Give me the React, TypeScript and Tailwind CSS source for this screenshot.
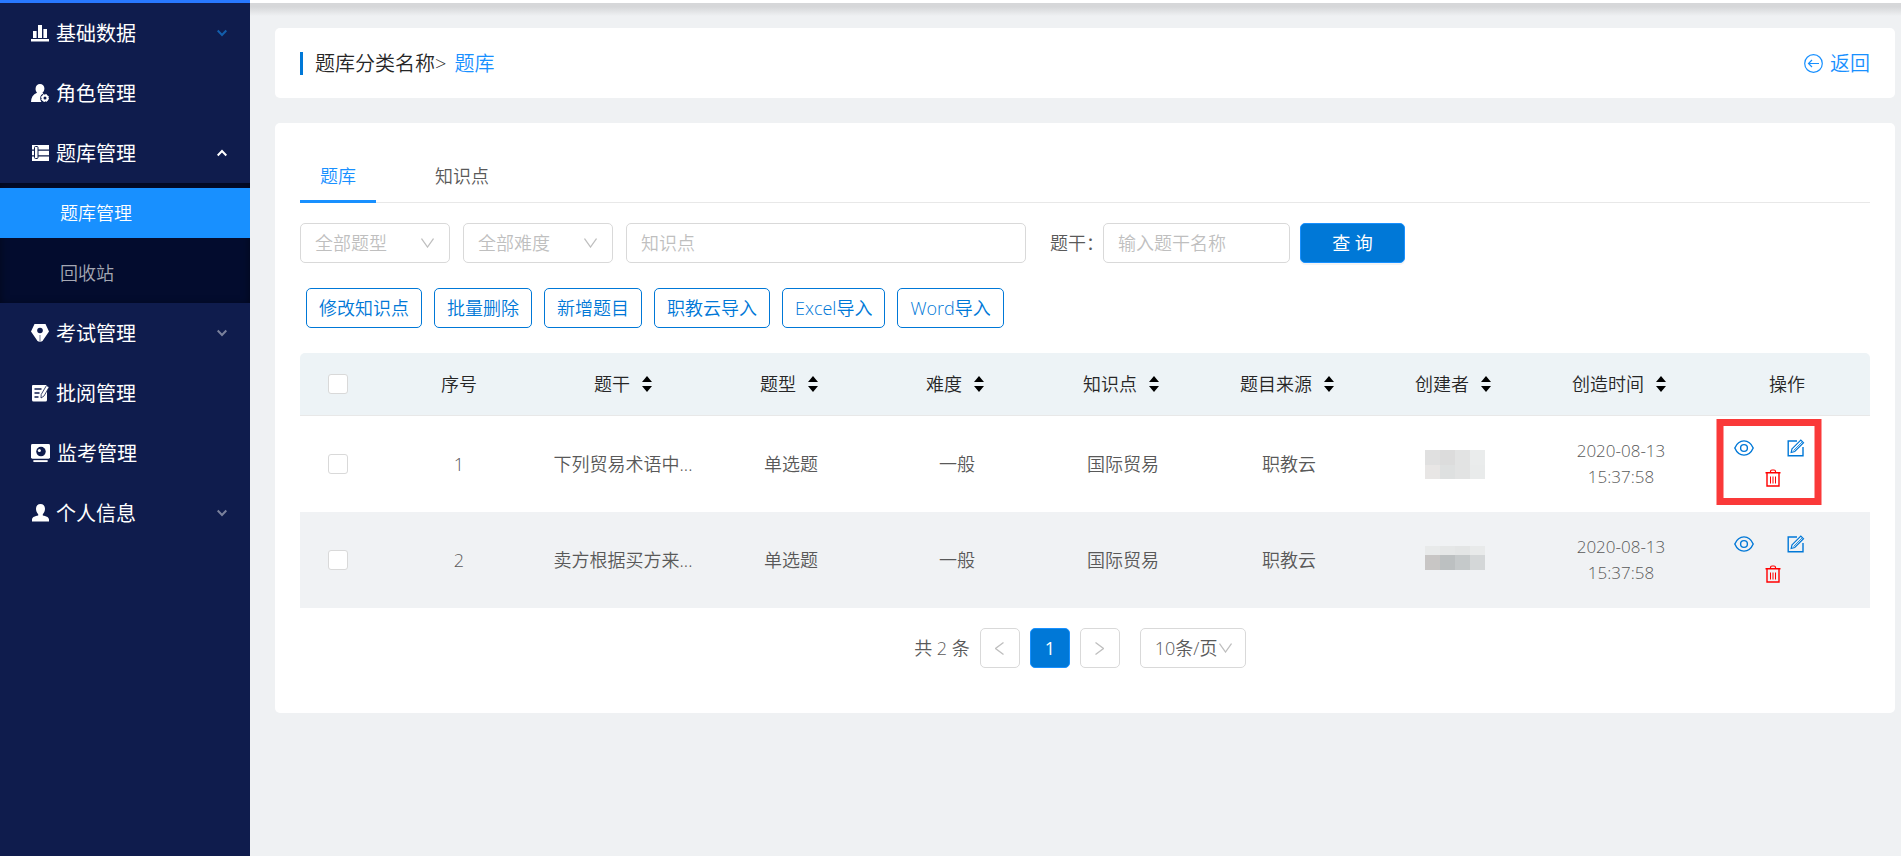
import { useState } from 'react';
import type { ReactNode } from 'react';
import clsx from 'clsx';

interface MenuItem {
  id: string;
  label: string;
  icon: ReactNode;
  arrow?: 'up' | 'down';
  arrowColor?: string;
  children?: { id: string; label: string }[];
}

interface Question {
  id: number;
  stem: string;
  type: string;
  level: string;
  point: string;
  source: string;
  creator: ReactNode;
  date: string;
  time: string;
}

const ChartIcon = () => (
  <svg width="18" height="18" viewBox="0 0 18 18" fill="currentColor" aria-hidden="true">
    <path d="M0 15h18v2.5H0zM2 7h3.6v7H2zM7 1h4v13H7zM12.4 5H16v9h-3.6z" />
  </svg>
);

const RoleIcon = () => (
  <svg width="18" height="18" viewBox="0 0 18 18" aria-hidden="true">
    <path
      fill="currentColor"
      d="M9 0a4.4 4.4 0 0 1 4.4 4.5c0 1.800-.8 3.300-2 4.300l1 .7A5 5 0 0 0 9.200 14c0 1.600.5 3 1.300 4H0c0-4.500 2-7.700 6-9.300A5 5 0 0 1 4.600 4.500 4.400 4.400 0 0 1 9 0z"
    />
    <circle cx="14" cy="14" r="2.500" fill="none" stroke="currentColor" strokeWidth="2" />
    <circle cx="14" cy="14" r="3.600" fill="none" stroke="currentColor" strokeWidth="1" strokeDasharray="1.500 1.330" />
  </svg>
);

const BankIcon = () => (
  <svg width="18" height="18" viewBox="0 0 18 18" aria-hidden="true">
    <path fill="currentColor" d="M1 1h17v4.500H1zM1 6.700h17v4.600H1zM1 12.500h17V17H1z" />
    <rect x="3.500" y="2.500" width="3.500" height="12" rx="1" fill="#fff" stroke="#0f1c4d" strokeWidth="1" />
  </svg>
);

const PenIcon = () => (
  <svg width="18" height="18" viewBox="0 0 18 18" aria-hidden="true">
    <path fill="currentColor" d="M3.500 0h11L18 7.500 11.500 17 9.300 18V11h-.6v7l-2.200-1L0 7.500z" />
    <circle cx="9" cy="6.500" r="2.800" fill="#0f1c4d" />
  </svg>
);

const ReviewIcon = () => (
  <svg width="18" height="18" viewBox="0 0 18 18" aria-hidden="true">
    <path fill="currentColor" d="M2 1h14v15a1.500 1.500 0 0 1-1.500 1.500h-12A1.500 1.500 0 0 1 1 16V2a1 1 0 0 1 1-1z" />
    <path fill="none" stroke="#0f1c4d" strokeWidth="1.300" d="M3.500 5h7M3.500 9h5M3.500 13h4" />
    <path fill="currentColor" stroke="#0f1c4d" strokeWidth=".8" d="M15.500 1.500 18.200 3 13 12l-3 2 .2-3.500z" />
  </svg>
);

const MonitorIcon = () => (
  <svg width="19" height="19" viewBox="0 0 20 20" aria-hidden="true">
    <rect width="20" height="15.500" rx="1.500" fill="currentColor" />
    <path fill="currentColor" d="M2.500 17h15v2h-15z" />
    <circle cx="10.500" cy="8" r="5" fill="#0f1c4d" />
    <circle cx="8.800" cy="6.800" r="1.600" fill="currentColor" />
  </svg>
);

const PersonIcon = () => (
  <svg width="18" height="18" viewBox="0 0 18 18" fill="currentColor" aria-hidden="true">
    <path d="M9.500 0C12.200 0 14 2 14 4.800c0 2.200-.8 4.200-2.200 5.400v1.300c3 .8 6.200 1.500 6.200 4v2H1v-2c0-2.500 3.200-3.200 6.200-4v-1.300C5.800 9 5 7 5 4.800 5 2 6.800 0 9.500 0z" />
  </svg>
);

const SmallArrow = ({ up }: { up?: boolean }) => (
  <svg width="10" height="8" viewBox="0 0 10 8" fill="none" stroke="currentColor" strokeWidth="2" aria-hidden="true">
    <path d={up ? 'M.7 6.500 5 2l4.300 4.500' : 'M.7 1.500 5 6l4.300-4.500'} />
  </svg>
);

const ThinChevron = () => (
  <svg width="13" height="10" viewBox="0 0 13 10" fill="none" stroke="#bfbfbf" strokeWidth="1.300" aria-hidden="true">
    <path d="M.5.5 6.500 9l6-8.500" />
  </svg>
);

const SortIcon = () => (
  <svg width="10" height="16" viewBox="0 0 10 16" fill="#000" aria-hidden="true">
    <path d="M5 0l5 6H0zM0 10h10l-5 6z" />
  </svg>
);

const BackIcon = () => (
  <svg width="19" height="19" viewBox="0 0 19 19" fill="none" stroke="currentColor" strokeWidth="1.200" aria-hidden="true">
    <circle cx="9.500" cy="9.500" r="8.800" />
    <path d="M15 9.500H4.500M8 6 4.500 9.500 8 13" />
  </svg>
);

const EyeIcon = () => (
  <svg width="20" height="16" viewBox="0 0 20 16" fill="none" stroke="currentColor" strokeWidth="1.400" aria-hidden="true">
    <path d="M.8 8C2.800 3.400 6 .9 10 .9S17.200 3.400 19.200 8c-2 4.600-5.200 7.100-9.200 7.100S2.800 12.600.8 8z" />
    <circle cx="10" cy="8" r="3.400" />
  </svg>
);

const EditIcon = () => (
  <svg width="18" height="18" viewBox="0 0 18 18" fill="none" stroke="currentColor" strokeWidth="1.400" aria-hidden="true">
    <path d="M10 2H1.200v14.800H16V8" />
    <path d="M5 9.800 13.800 1l2.700 2.700L7.700 12.500l-3.500 1z" strokeWidth="1.200" />
    <path d="M6.500 11.500 15 3" strokeWidth=".8" />
  </svg>
);

const TrashIcon = () => (
  <svg width="16" height="18" viewBox="0 0 16 18" fill="none" stroke="currentColor" aria-hidden="true">
    <path d="M5.500 3.500V2.500A1.500 1.500 0 0 1 7 1h2a1.500 1.500 0 0 1 1.500 1.500v1" strokeWidth="1.200" />
    <path d="M.5 3.700h15M2 3.700V17h12V3.700" strokeWidth="1.400" />
    <path d="M5.500 7.500v7M8 7.500v7M10.500 7.500v7" strokeWidth="1" />
  </svg>
);

const MENU: MenuItem[] = [
  { id: 'base', label: '基础数据', icon: <ChartIcon />, arrow: 'down', arrowColor: 'text-[#135eac]' },
  { id: 'role', label: '角色管理', icon: <RoleIcon /> },
  {
    id: 'bank',
    label: '题库管理',
    icon: <BankIcon />,
    arrow: 'up',
    arrowColor: 'text-white',
    children: [
      { id: 'bank-list', label: '题库管理' },
      { id: 'recycle', label: '回收站' },
    ],
  },
  { id: 'exam', label: '考试管理', icon: <PenIcon />, arrow: 'down', arrowColor: 'text-[#7a819c]' },
  { id: 'review', label: '批阅管理', icon: <ReviewIcon /> },
  { id: 'monitor', label: '监考管理', icon: <MonitorIcon /> },
  { id: 'profile', label: '个人信息', icon: <PersonIcon />, arrow: 'down', arrowColor: 'text-[#7a819c]' },
];

const TABS = ['题库', '知识点'];

const ACTIONS = ['修改知识点', '批量删除', '新增题目', '职教云导入', 'Excel导入', 'Word导入'];

const COLUMNS = [
  { label: '序号', sortable: false },
  { label: '题干', sortable: true },
  { label: '题型', sortable: true },
  { label: '难度', sortable: true },
  { label: '知识点', sortable: true },
  { label: '题目来源', sortable: true },
  { label: '创建者', sortable: true },
  { label: '创造时间', sortable: true },
  { label: '操作', sortable: false },
];

// Creator names are masked with a block mosaic
function Mosaic({ top, bottom, split, end }: { top: string[]; bottom: string[]; split: number; end: number }) {
  return (
    <svg width="60" height="29" viewBox="0 0 60 29" className="mx-auto block" role="img" aria-label="创建者">
      {top.map((fill, i) => (
        <rect key={`t${i}`} x={i * 15} y={0} width={15} height={split} fill={fill} />
      ))}
      {bottom.map((fill, i) => (
        <rect key={`b${i}`} x={i * 15} y={split} width={15} height={end - split} fill={fill} />
      ))}
    </svg>
  );
}

const QUESTIONS: Question[] = [
  {
    id: 1,
    stem: '下列贸易术语中...',
    type: '单选题',
    level: '一般',
    point: '国际贸易',
    source: '职教云',
    creator: (
      <Mosaic
        top={['#e0e0e0', '#dcdcdc', '#e2e3e3', '#eaecec']}
        bottom={['#e8e6e5', '#dee0e0', '#e2e3e3', '#e9ebeb']}
        split={15}
        end={29}
      />
    ),
    date: '2020-08-13',
    time: '15:37:58',
  },
  {
    id: 2,
    stem: '卖方根据买方来...',
    type: '单选题',
    level: '一般',
    point: '国际贸易',
    source: '职教云',
    creator: (
      <Mosaic
        top={['#e8eaea', '#e5e7e7', '#e3e5e5', '#e8eaea']}
        bottom={['#c8c6c5', '#bcc0c1', '#c5c9ca', '#d4d7d8']}
        split={9}
        end={24}
      />
    ),
    date: '2020-08-13',
    time: '15:37:58',
  },
];

const checkboxClass =
  'block size-5 mx-auto appearance-none rounded-[3px] border border-[#d9d9d9] bg-white checked:border-[#1890ff] checked:bg-[#1890ff]';

const fieldClass =
  'h-10 rounded-[5px] border border-[#d9d9d9] bg-white px-[14px] placeholder:text-[#bfbfbf] outline-none focus:border-[#1890ff]';

function Sidebar() {
  const [active, setActive] = useState('bank-list');

  return (
    <nav className="w-[250px] shrink-0 border-t-3 border-[#2878ff] bg-[#0f1c4d] font-normal text-white">
      <ul>
        {MENU.map((item) => (
          <li key={item.id}>
            <button type="button" className="flex h-15 w-full items-center gap-[7px] pr-[23px] pl-[31px] text-[20px]">
              {item.icon}
              <span className="pt-[2px]">{item.label}</span>
              {item.arrow && (
                <span className={clsx('ml-auto', item.arrowColor)}>
                  <SmallArrow up={item.arrow === 'up'} />
                </span>
              )}
            </button>
            {item.children && (
              <ul className="flex flex-col gap-[10px] bg-[#030c2e] py-[5px] shadow-[inset_0_2px_8px_rgba(0,0,0,0.45)]">
                {item.children.map((child) => (
                  <li key={child.id}>
                    <button
                      type="button"
                      onClick={() => setActive(child.id)}
                      className={clsx(
                        'flex h-[50px] w-full items-center pl-[60px] text-[18px] font-[350]',
                        active === child.id ? 'bg-[#1890ff] text-white' : 'text-[#a5a8b3]'
                      )}
                    >
                      {child.label}
                    </button>
                  </li>
                ))}
              </ul>
            )}
          </li>
        ))}
      </ul>
    </nav>
  );
}

function FilterSelect({ label }: { label: string }) {
  return (
    <div className="relative">
      <select aria-label={label} className={clsx(fieldClass, 'w-[150px] appearance-none text-[#bfbfbf]')}>
        <option>{label}</option>
      </select>
      <span className="pointer-events-none absolute inset-y-0 right-4 flex items-center">
        <ThinChevron />
      </span>
    </div>
  );
}

function RowActions({ highlighted }: { highlighted?: boolean }) {
  return (
    <div className="relative mr-9 mb-[2px] flex flex-col items-center gap-3">
      <div className="flex items-center gap-[33px] text-[#0078d7]">
        <button type="button" aria-label="查看">
          <EyeIcon />
        </button>
        <button type="button" aria-label="编辑">
          <EditIcon />
        </button>
      </div>
      <button type="button" aria-label="删除" className="ml-2 text-[#ff0000]">
        <TrashIcon />
      </button>
      {highlighted && (
        <div className="pointer-events-none absolute -top-5 -bottom-[18px] left-1/2 w-[105px] -translate-x-1/2 border-7 border-[#fa3939]" />
      )}
    </div>
  );
}

function QuestionTable() {
  return (
    <table className="w-full table-fixed border-separate border-spacing-0 text-center">
      <colgroup>
        <col className="w-[76px]" />
        {COLUMNS.map((col) => (
          <col key={col.label} />
        ))}
      </colgroup>
      <thead className="text-[#262626]">
        <tr className="h-[63px]">
          <th className="rounded-tl-[5px] border-b border-[#e8e8e8] bg-[#edf3f6] p-0">
            <input type="checkbox" aria-label="全选" className={checkboxClass} />
          </th>
          {COLUMNS.map((col) => (
            <th
              key={col.label}
              className={clsx(
                'border-b border-[#e8e8e8] bg-[#edf3f6] font-[350] last:rounded-tr-[5px]',
                col.sortable && 'pr-1'
              )}
            >
              <span className="inline-flex items-center gap-3">
                {col.label}
                {col.sortable && (
                  <button type="button" aria-label={`${col.label}排序`}>
                    <SortIcon />
                  </button>
                )}
              </span>
            </th>
          ))}
        </tr>
      </thead>
      <tbody>
        {QUESTIONS.map((q, i) => (
          <tr key={q.id} className="h-24 even:bg-[#f0f2f4]">
            <td>
              <input type="checkbox" aria-label={`选择第${q.id}题`} className={checkboxClass} />
            </td>
            <td>{q.id}</td>
            <td className="pr-1">{q.stem}</td>
            <td>{q.type}</td>
            <td>{q.level}</td>
            <td>{q.point}</td>
            <td>{q.source}</td>
            <td>{q.creator}</td>
            <td className="text-[17px] leading-[26px]">
              {q.date}
              <br />
              {q.time}
            </td>
            <td>
              <RowActions highlighted={i === 0} />
            </td>
          </tr>
        ))}
      </tbody>
    </table>
  );
}

function Pagination() {
  const box = 'flex size-10 items-center justify-center rounded-[5px] border';

  return (
    <div className="mt-5 flex items-center justify-center gap-[10px] pr-[10px]">
      <span>共 2 条</span>
      <button type="button" aria-label="上一页" className={clsx(box, 'border-[#d9d9d9]')}>
        <svg width="9" height="13" viewBox="0 0 9 13" fill="none" stroke="#bfbfbf" strokeWidth="1.300" aria-hidden="true">
          <path d="M8.500.5.500 6.500l8 6" />
        </svg>
      </button>
      <button type="button" className={clsx(box, 'border-[#1890ff] bg-[#0078d7] font-normal text-white')}>
        1
      </button>
      <button type="button" aria-label="下一页" className={clsx(box, 'border-[#d9d9d9]')}>
        <svg width="9" height="13" viewBox="0 0 9 13" fill="none" stroke="#bfbfbf" strokeWidth="1.300" aria-hidden="true">
          <path d="M.5.500l8 6-8 6" />
        </svg>
      </button>
      <div className="relative ml-[10px]">
        <select aria-label="每页条数" className={clsx(fieldClass, 'w-[106px] appearance-none')}>
          <option>10条/页</option>
        </select>
        <span className="pointer-events-none absolute inset-y-0 right-[14px] flex items-center">
          <ThinChevron />
        </span>
      </div>
    </div>
  );
}

export default function App() {
  const [tab, setTab] = useState('题库');

  return (
    <div className="flex min-h-screen bg-[#eff1f3] font-['Open_Sans','Noto_Sans_CJK_SC',sans-serif] text-[18px] font-[350] text-[#595959]">
      <Sidebar />

      <div className="min-w-0 flex-1">
        {/* Lower edge of the header and its shadow */}
        <div className="h-[3px] bg-white" />
        <div className="h-[13px] bg-linear-to-b from-[#d6d7d9] from-30% to-[#eff1f3]" />

        <main className="flex flex-col gap-[25px] pt-3 pr-[6px] pb-6 pl-[25px]">
          <header className="flex h-[70px] items-center rounded-[5px] bg-white px-[25px] text-[20px]">
            <div className="mr-3 h-[23px] w-[3px] bg-[#0078d7]" />
            <h1 className="flex gap-2 pt-[2px] text-[#262626]">
              题库分类名称&gt;
              <a href="#bank" className="text-[#1890ff]">
                题库
              </a>
            </h1>
            <a href="#back" className="ml-auto flex items-center gap-[7px] text-[#1890ff]">
              <BackIcon />
              <span className="pt-[2px]">返回</span>
            </a>
          </header>

          <section className="rounded-[5px] bg-white px-[25px] pt-7 pb-[45px]">
            <div role="tablist" className="flex gap-[39px] border-b border-[#e8e8e8]">
              {TABS.map((name) => (
                <button
                  key={name}
                  type="button"
                  role="tab"
                  aria-selected={tab === name}
                  onClick={() => setTab(name)}
                  className={clsx(
                    '-mb-px h-[52px] border-b-3 px-5 pt-[2px]',
                    tab === name ? 'border-[#1890ff] text-[#1890ff]' : 'border-transparent'
                  )}
                >
                  {name}
                </button>
              ))}
            </div>

            <div className="mt-5 flex items-center">
              <div className="flex gap-[13px]">
                <FilterSelect label="全部题型" />
                <FilterSelect label="全部难度" />
                <input type="text" aria-label="知识点" placeholder="知识点" className={clsx(fieldClass, 'w-[400px]')} />
              </div>
              <label htmlFor="stem" className="ml-6 w-[53px] whitespace-nowrap">
                题干：
              </label>
              <input id="stem" type="text" placeholder="输入题干名称" className={clsx(fieldClass, 'w-[187px]')} />
              <button
                type="button"
                className="ml-[10px] h-10 w-[105px] rounded-[5px] border border-[#1890ff] bg-[#0078d7] font-normal text-white shadow-[0_2px_0_rgba(0,0,0,0.045)]"
              >
                查 询
              </button>
            </div>

            <div className="mt-[25px] flex gap-3 pl-[6px]">
              {ACTIONS.map((label) => (
                <button
                  key={label}
                  type="button"
                  className="h-10 rounded-[5px] border border-[#0078d7] bg-white px-3 text-[#0078d7] hover:bg-[#f0f8ff]"
                >
                  {label}
                </button>
              ))}
            </div>

            <div className="mt-[25px]">
              <QuestionTable />
            </div>
            <Pagination />
          </section>
        </main>
      </div>
    </div>
  );
}
